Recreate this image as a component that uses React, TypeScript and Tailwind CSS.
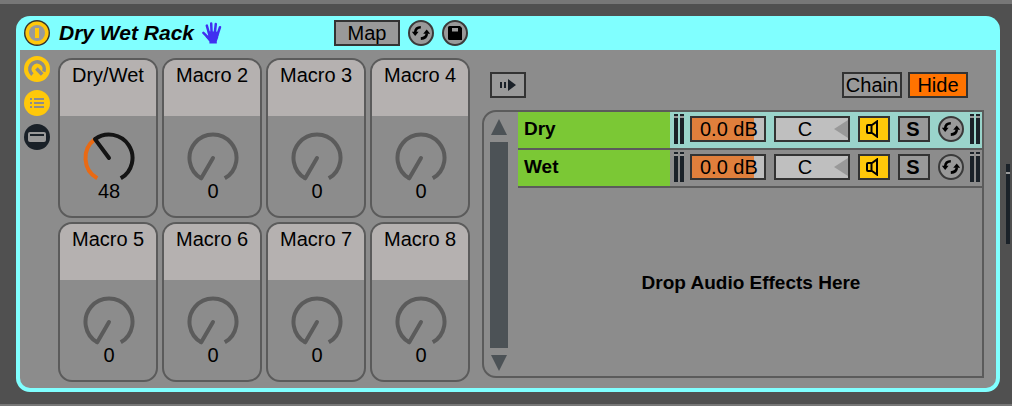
import { useState } from "react";

function PowerIcon() {
  return (
    <svg viewBox="0 0 26 26" className="size-[26px]" aria-hidden="true">
      <circle cx="13" cy="13" r="13" fill="#33332d" />
      <circle cx="13" cy="13" r="11.6" fill="#ffc80a" />
      <circle cx="13" cy="13" r="8" fill="#999" />
      <rect x="11" y="8" width="4" height="10" fill="#ffc80a" />
    </svg>
  );
}

function DialIcon() {
  return (
    <svg viewBox="0 0 26 26" className="size-[26px]" aria-hidden="true">
      <circle cx="13" cy="13" r="13" fill="#ffc80a" />
      <path d="M8.4 18.6A7.2 7.2 0 1 1 19.8 15.6" fill="none" stroke="#8c8c8c" strokeWidth="3.6" />
      <path d="M12.4 12.6L18.2 18.6" stroke="#8c8c8c" strokeWidth="3.6" />
    </svg>
  );
}

function ListIcon() {
  return (
    <svg viewBox="0 0 26 26" className="size-[26px]" aria-hidden="true">
      <circle cx="13" cy="13" r="13" fill="#ffc80a" />
      <path d="M6 9h2M6 13h2M6 17h2M10 9h10M10 13h10M10 17h10" stroke="#8c8c8c" strokeWidth="2" />
    </svg>
  );
}

function DevicesIcon() {
  return (
    <svg viewBox="0 0 26 26" className="size-[26px]" aria-hidden="true">
      <circle cx="13" cy="13" r="13" fill="#1a2128" />
      <rect x="4" y="8" width="18" height="10" rx="2" fill="#999" />
      <path d="M6 11h14" stroke="#1a2128" strokeWidth="2" />
    </svg>
  );
}

function SwapIcon() {
  return (
    <svg viewBox="0 0 26 26" className="size-[26px]" aria-hidden="true">
      <circle cx="13" cy="13" r="12" fill="#999" stroke="#3a3a3a" strokeWidth="2" />
      <path d="M12.8 7.2C9.3 7.2 7.4 9.2 7.2 12.3" fill="none" stroke="#000" strokeWidth="2.6" />
      <path d="M3.8 11.8H10.6L7.2 16Z" fill="#000" />
      <path d="M12.8 18.6C16.6 18.4 18.7 16.6 18.8 13.4" fill="none" stroke="#000" strokeWidth="2.6" />
      <path d="M15.2 13.8H22.2L18.7 9.4Z" fill="#000" />
    </svg>
  );
}

function SaveIcon() {
  return (
    <svg viewBox="0 0 26 26" className="size-[26px]" aria-hidden="true">
      <circle cx="13" cy="13" r="12" fill="#999" stroke="#3a3a3a" strokeWidth="2" />
      <path d="M6 7.5Q6 6 7.5 6H18l2 2V20H7.5Q6 20 6 18.5Z" fill="#000" />
      <rect x="10" y="8" width="6" height="3.5" fill="#999" />
    </svg>
  );
}

function HandIcon() {
  return (
    <svg viewBox="0 0 20 22" className="h-[22px] w-5" aria-hidden="true">
      <g stroke="#4030f0" strokeWidth="2.5" strokeLinecap="round" fill="none">
        <path d="M4.8 3.6L7.2 12" />
        <path d="M9.2 1.6L9.6 11" />
        <path d="M13.8 2L12.8 11" />
        <path d="M18 5.2L15.4 13" />
        <path d="M1.4 10.8L7 16.4" />
      </g>
      <path d="M5.6 9.2L16.6 9.8L16.2 15.6L14.8 19.2V21.6H7.4V19.6L3.2 14.4L6.2 13.8Z" fill="#4030f0" />
    </svg>
  );
}

function SpeakerIcon() {
  return (
    <svg viewBox="0 0 14 18" className="h-[18px] w-3.5" aria-hidden="true">
      <path d="M7 5H3Q2 5 2 6V12Q2 13 3 13H7M6.5 5V13M7 5L12 1.4V16.6L7 13" fill="none" stroke="#000" strokeWidth="2" />
    </svg>
  );
}

function point(angle: number, radius: number) {
  const a = (angle * Math.PI) / 180;
  return `${27 + radius * Math.sin(a)} ${27 - radius * Math.cos(a)}`;
}

function arc(from: number, to: number) {
  return `M${point(from, 23.5)}A23.5 23.5 0 ${to - from > 180 ? 1 : 0} 1 ${point(to, 23.5)}`;
}

function Macro({ name, initial, mapped }: { name: string; initial: number; mapped: boolean }) {
  const [value, setValue] = useState(initial);
  const angle = -150 + (value / 127) * 300;
  const color = mapped ? "#141414" : "#5b5b5b";
  return (
    <label className="flex h-40 w-[100px] flex-col items-center overflow-hidden rounded-[14px] border-2 border-[#5b5b5b] bg-[#8c8c8c]">
      <span className="h-14 w-full bg-[#b5b1b0] pl-3 pt-[3px] text-[20px] leading-6 whitespace-nowrap">{name}</span>
      <input
        type="range"
        min={0}
        max={127}
        value={value}
        onChange={(e) => setValue(Number(e.target.value))}
        className="sr-only"
      />
      <svg viewBox="0 0 54 54" className="ml-0.5 mt-[15px] size-[54px] shrink-0" fill="none" strokeWidth="4" aria-hidden="true">
        {mapped && <path d={arc(-150, angle)} stroke="#e96a14" />}
        <path d={arc(angle, 150)} stroke={color} />
        <path d={`M27 27L${point(angle, 23.5)}`} stroke={color} strokeLinecap="round" />
      </svg>
      <span className="-mt-1.5 ml-0.5 text-[20px] leading-6">{value}</span>
    </label>
  );
}

function Meter() {
  return (
    <div className="flex gap-0.5" aria-hidden="true">
      {[0, 1].map((i) => (
        <div key={i} className="flex h-[30px] w-1 flex-col">
          <div className="h-0.5 bg-[#1a2128]" />
          <div className="h-0.5 bg-[#999]" />
          <div className="flex-1 bg-[#1a2128]" />
        </div>
      ))}
    </div>
  );
}

function ChainRow({ name, selected }: { name: string; selected: boolean }) {
  return (
    <div
      className={
        selected
          ? "flex h-[38px] border-b-2 border-[#5b5b5b] bg-[#9ad4cb]"
          : "flex h-[38px] border-b-2 border-[#5b5b5b] bg-[#8c8c8c]"
      }
    >
      <div className="min-w-[100px] flex-1 bg-[#7bc835] pl-1.5 text-[19px] font-bold leading-[34px]">{name}</div>
      <div className="flex shrink-0 gap-2 pl-1 pr-0.5 pt-1">
        <div className="-mt-0.5 -mr-0.5">
          <Meter />
        </div>
        <input
          aria-label={`${name} volume`}
          defaultValue="0.0 dB"
          className="h-[26px] w-[76px] border-2 border-[#333] bg-[linear-gradient(to_right,#e07f3c_62px,#bfbfbf_62px)] pl-2 text-[20px] leading-5 outline-none"
        />
        <div className="relative">
          <input
            aria-label={`${name} pan`}
            defaultValue="C"
            className="block h-[26px] w-[76px] border-2 border-[#333] bg-[#bfbfbf] pr-3.5 text-center text-[20px] leading-5 outline-none"
          />
          <svg viewBox="0 0 14 18" className="pointer-events-none absolute right-0.5 top-1 h-[18px] w-3.5" aria-hidden="true">
            <path d="M14 0V18L0 9Z" fill="#999" />
          </svg>
        </div>
        <button
          type="button"
          aria-label={`${name} activator`}
          className="flex h-[26px] w-8 items-center justify-center border-2 border-[#333] bg-[#ffc80a] pr-1"
        >
          <SpeakerIcon />
        </button>
        <button
          type="button"
          aria-label={`Solo ${name}`}
          className="h-[26px] w-8 border-2 border-[#333] bg-[#999] pr-0.5 text-[20px] font-bold leading-[22px]"
        >
          S
        </button>
        <button type="button" aria-label={`Hot-swap ${name}`} className="h-[26px]">
          <SwapIcon />
        </button>
        <div className="-mt-0.5 -ml-0.5">
          <Meter />
        </div>
      </div>
    </div>
  );
}

const macros = ["Dry/Wet", "Macro 2", "Macro 3", "Macro 4", "Macro 5", "Macro 6", "Macro 7", "Macro 8"];

export default function App() {
  return (
    <main className="flex min-h-screen border-b-2 border-t-4 border-b-[#777] border-t-[#777] bg-[#505050] py-3 pl-4 font-['Liberation_Sans',Arial,sans-serif] text-black">
      <section className="flex min-w-0 flex-1 flex-col overflow-hidden rounded-[14px] bg-[#80ffff] px-1 pb-1">
        <header className="flex h-[34px] items-center pl-1">
          <button type="button" aria-label="Device activator">
            <PowerIcon />
          </button>
          <div className="flex w-[284px] items-center gap-2 pl-[9px]">
            <h1 className="text-[21px] font-bold italic leading-8 whitespace-nowrap">Dry Wet Rack</h1>
            <HandIcon />
          </div>
          <div className="flex items-center gap-2">
            <button type="button" className="h-[26px] w-[66px] border-2 border-[#333] bg-[#999] text-[20px] leading-[22px]">
              Map
            </button>
            <button type="button" aria-label="Hot-swap">
              <SwapIcon />
            </button>
            <button type="button" aria-label="Save preset">
              <SaveIcon />
            </button>
          </div>
        </header>

        <div className="flex flex-1 gap-3 rounded-b-[10px] bg-[#8c8c8c] pb-1.5 pl-1 pr-3 pt-2">
          <div className="flex shrink-0 gap-2">
            <nav aria-label="Rack views" className="-mt-0.5 flex flex-col gap-2">
              <button type="button" aria-label="Macro controls">
                <DialIcon />
              </button>
              <button type="button" aria-label="Chain list">
                <ListIcon />
              </button>
              <button type="button" aria-label="Devices">
                <DevicesIcon />
              </button>
            </nav>
            <div className="grid grid-cols-4 content-start gap-1">
              {macros.map((name, i) => (
                <Macro key={name} name={name} initial={i === 0 ? 48 : 0} mapped={i === 0} />
              ))}
            </div>
          </div>

          <div className="flex min-w-0 flex-1 flex-col pb-1 pt-3.5">
            <div className="flex items-center gap-1.5 pb-3 pl-2 pr-4">
              <button
                type="button"
                aria-label="Auto select"
                className="mr-auto flex h-[26px] w-9 items-center justify-center border-2 border-[#333] bg-[#999]"
              >
                <svg viewBox="0 0 16 12" className="h-3 w-4" aria-hidden="true">
                  <path d="M0 3h2v6H0zM4 3h2v6H4zM8 0L16 6L8 12Z" fill="#1a2128" />
                </svg>
              </button>
              <button type="button" className="h-[26px] w-[60px] border-2 border-[#333] bg-[#999] text-[20px] leading-[22px]">
                Chain
              </button>
              <button type="button" className="h-[26px] w-[60px] border-2 border-[#333] bg-[#ff7300] text-[20px] leading-[22px]">
                Hide
              </button>
            </div>
            <div className="flex flex-1 rounded-l-[14px] border-2 border-[#5b5b5b]">
              <div className="flex w-[34px] shrink-0 flex-col gap-[7px] pb-[5px] pl-1.5 pt-[7px]" aria-hidden="true">
                <svg viewBox="0 0 18 16" className="h-4 w-[18px]">
                  <path d="M9 0L17 16H1Z" fill="#4c5256" />
                </svg>
                <div className="w-[18px] flex-1 bg-[#4c5256]" />
                <svg viewBox="0 0 18 16" className="h-4 w-[18px]">
                  <path d="M1 0H17L9 16Z" fill="#4c5256" />
                </svg>
              </div>
              <div className="flex min-w-0 flex-1 flex-col">
                <ChainRow name="Dry" selected />
                <ChainRow name="Wet" selected={false} />
                <p className="flex flex-1 items-center justify-center pl-0.5 pt-0.5 text-[19px] font-bold leading-6">
                  Drop Audio Effects Here
                </p>
              </div>
            </div>
          </div>
        </div>
      </section>
      <div className="mt-[148px] flex h-20 w-3 shrink-0 flex-col pl-1.5 pr-0.5" aria-hidden="true">
        <div className="h-2 bg-[#1a2128]" />
        <div className="h-0.5 bg-[#999]" />
        <div className="flex-1 bg-[#1a2128]" />
      </div>
    </main>
  );
}
